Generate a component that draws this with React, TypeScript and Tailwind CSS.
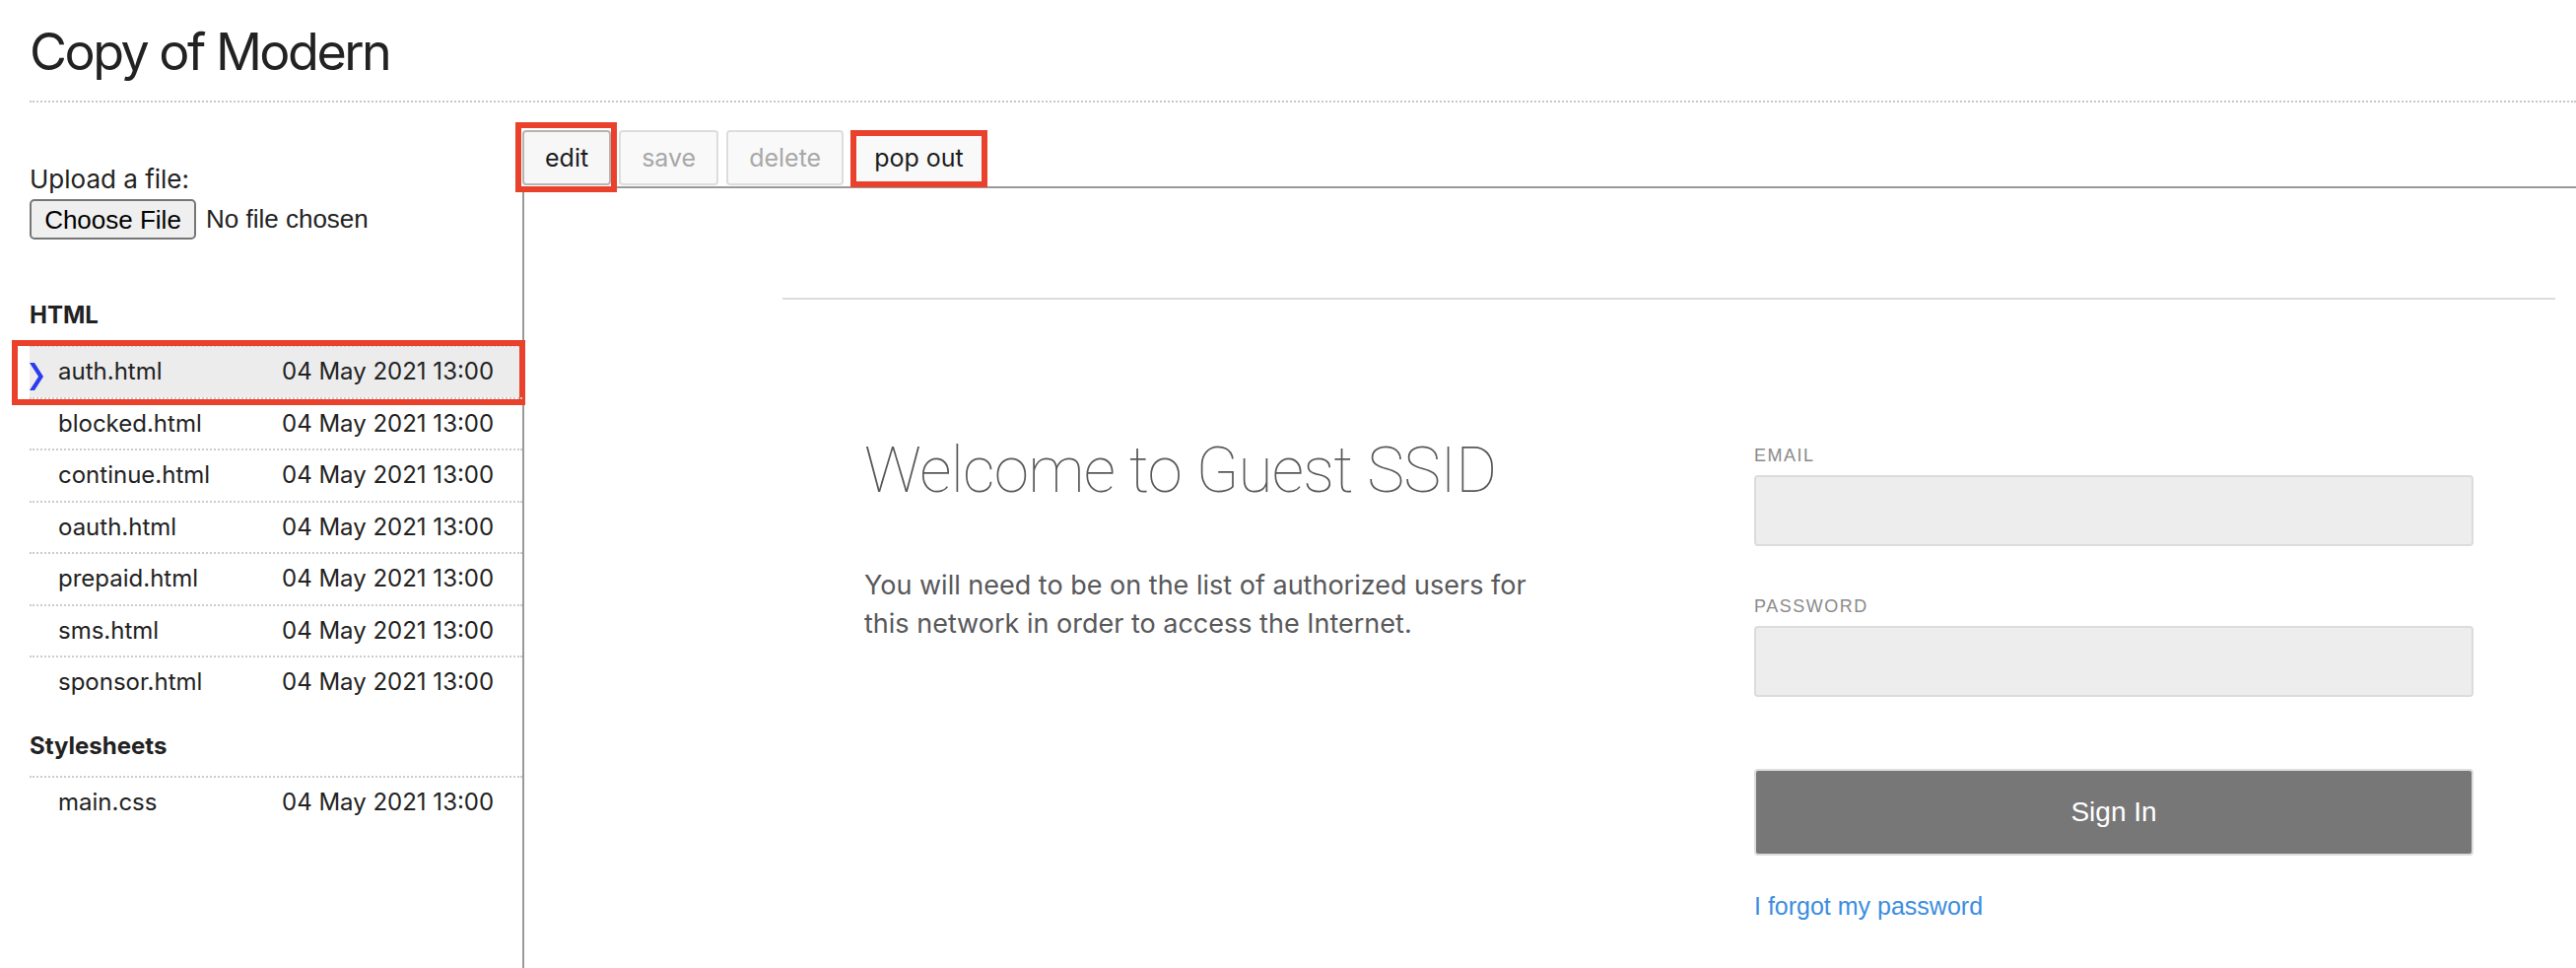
const HTML_FILES = [
  'auth.html',
  'blocked.html',
  'continue.html',
  'oauth.html',
  'prepaid.html',
  'sms.html',
  'sponsor.html',
];
const STYLESHEETS = ['main.css'];
const STAMP = '04 May 2021 13:00';

function FileRow({ name, selected = false }: { name: string; selected?: boolean }) {
  return (
    <div
      className={`relative flex h-[52.5px] items-center border-t-2 border-dotted border-[#cccccc] text-[24px] ${
        selected ? 'bg-[#ececec]' : ''
      }`}
    >
      <span className="flex w-[29px] shrink-0 items-center">
        {selected && (
          <svg className="mt-[10px] h-[28px] w-[14px]" viewBox="0 0 14 28" aria-hidden>
            <polygon points="0,0 5,0 14,14 5,28 0,28 9,14" fill="#2b3cf0" />
          </svg>
        )}
      </span>
      <span className="w-[227px] shrink-0">{name}</span>
      <span>{STAMP}</span>
      {selected && (
        <span className="pointer-events-none absolute -top-[7px] -right-[3px] -bottom-[8px] -left-[18px] border-[6px] border-[#e9412c]" />
      )}
    </div>
  );
}

function ToolButton({
  label,
  disabled = false,
  active = false,
  marked = '',
}: {
  label: string;
  disabled?: boolean;
  active?: boolean;
  marked?: 'edit' | 'pop' | '';
}) {
  return (
    <div className="relative">
      <button
        type="button"
        disabled={disabled}
        className={`h-[56px] rounded-[4px] border-2 px-[21px] text-[25px] leading-none ${
          disabled
            ? 'border-[#dddddd] bg-[#f9f9f9] text-[#a8a8a8]'
            : active
              ? 'border-[#b5b5b5] bg-[#f7f7f7] text-[#1c1c1c]'
              : 'border-[#dddddd] bg-[#f9f9f9] text-[#1c1c1c]'
        }`}
      >
        {label}
      </button>
      {marked === 'edit' && (
        <span className="pointer-events-none absolute -top-[8px] -right-[6px] -bottom-[7px] -left-[7px] border-[6px] border-[#e9412c]" />
      )}
      {marked === 'pop' && (
        <span className="pointer-events-none absolute top-0 -right-[1px] -bottom-[2px] -left-[1px] border-[6px] border-[#e9412c]" />
      )}
    </div>
  );
}

function GuestPortal() {
  return (
    <div className="ml-[262px] mr-[21px]">
      <div className="mt-[111px] border-t-2 border-[#dddddd]" />
      <div className="mt-[142px] flex px-[83px]">
        <div className="min-w-0 flex-1 text-[#58585b]">
          <h2 className="font-[Roboto,sans-serif] text-[64px] leading-none font-thin tracking-[-0.8px] whitespace-nowrap">
            Welcome to Guest SSID
          </h2>
          <p className="mt-[63.5px] w-[700px] text-[27px] leading-[39px]">
            You will need to be on the list of authorized users for this network in order to access the Internet.
          </p>
        </div>
        <form className="flex w-[730px] shrink-0 flex-col font-['Liberation_Sans',Arial,sans-serif]">
          <label className="mt-[6px] text-[18px] leading-[20px] tracking-[1.5px] text-[#8a8a8a] uppercase">Email</label>
          <input
            type="text"
            readOnly
            className="mt-[10px] h-[72px] rounded-[4px] border-2 border-[#dcdcdc] bg-[#ededed] outline-none"
          />
          <label className="mt-[51px] text-[18px] leading-[20px] tracking-[1.5px] text-[#8a8a8a] uppercase">
            Password
          </label>
          <input
            type="password"
            readOnly
            className="mt-[10px] h-[72px] rounded-[4px] border-2 border-[#dcdcdc] bg-[#ededed] outline-none"
          />
          <button
            type="button"
            className="mt-[73px] h-[88px] rounded-[4px] border-2 border-[#dddddd] bg-[#777777] text-[28px] text-white"
          >
            Sign In
          </button>
          <a href="#" className="mt-[36px] self-start text-[25px] leading-[30px] text-[#3b8de0]">
            I forgot my password
          </a>
        </form>
      </div>
    </div>
  );
}

export default function App() {
  return (
    <div className="flex h-screen flex-col overflow-hidden bg-white font-[Inter,sans-serif] text-[#222222]">
      <header className="ml-[30px] border-b-2 border-dotted border-[#c8c8c8] pt-[27px] pb-[23px]">
        <h1 className="text-[52px] leading-none font-normal tracking-[-2.5px]">Copy of Modern</h1>
      </header>

      <div className="flex min-h-0 flex-1">
        <aside className="ml-[30px] w-[500px] shrink-0 pt-[63px]">
          <p className="text-[26px] leading-[30px]">Upload a file:</p>
          <div className="mt-[5px] flex items-center gap-[10px] font-['Liberation_Sans',Arial,sans-serif] text-[26px]">
            <button
              type="button"
              className="h-[41px] w-[169px] rounded-[5px] border-2 border-[#767676] bg-[#efefef] text-black"
            >
              Choose File
            </button>
            <span>No file chosen</span>
          </div>

          <h2 className="mt-[62px] mb-[15px] text-[24px] leading-[30px] font-bold">HTML</h2>
          {HTML_FILES.map((f) => (
            <FileRow key={f} name={f} selected={f === 'auth.html'} />
          ))}

          <h2 className="mt-[24.5px] mb-[15px] text-[24px] leading-[30px] font-bold">Stylesheets</h2>
          {STYLESHEETS.map((f) => (
            <FileRow key={f} name={f} />
          ))}
        </aside>

        <main className="flex min-w-0 flex-1 flex-col pt-[28px]">
          <div className="flex gap-[8px]">
            <ToolButton label="edit" active marked="edit" />
            <ToolButton label="save" disabled />
            <ToolButton label="delete" disabled />
            <ToolButton label="pop out" marked="pop" />
          </div>
          <div className="mt-[1px] min-h-0 flex-1 overflow-hidden border-t-2 border-l-2 border-[#999999]">
            <GuestPortal />
          </div>
        </main>
      </div>
    </div>
  );
}
